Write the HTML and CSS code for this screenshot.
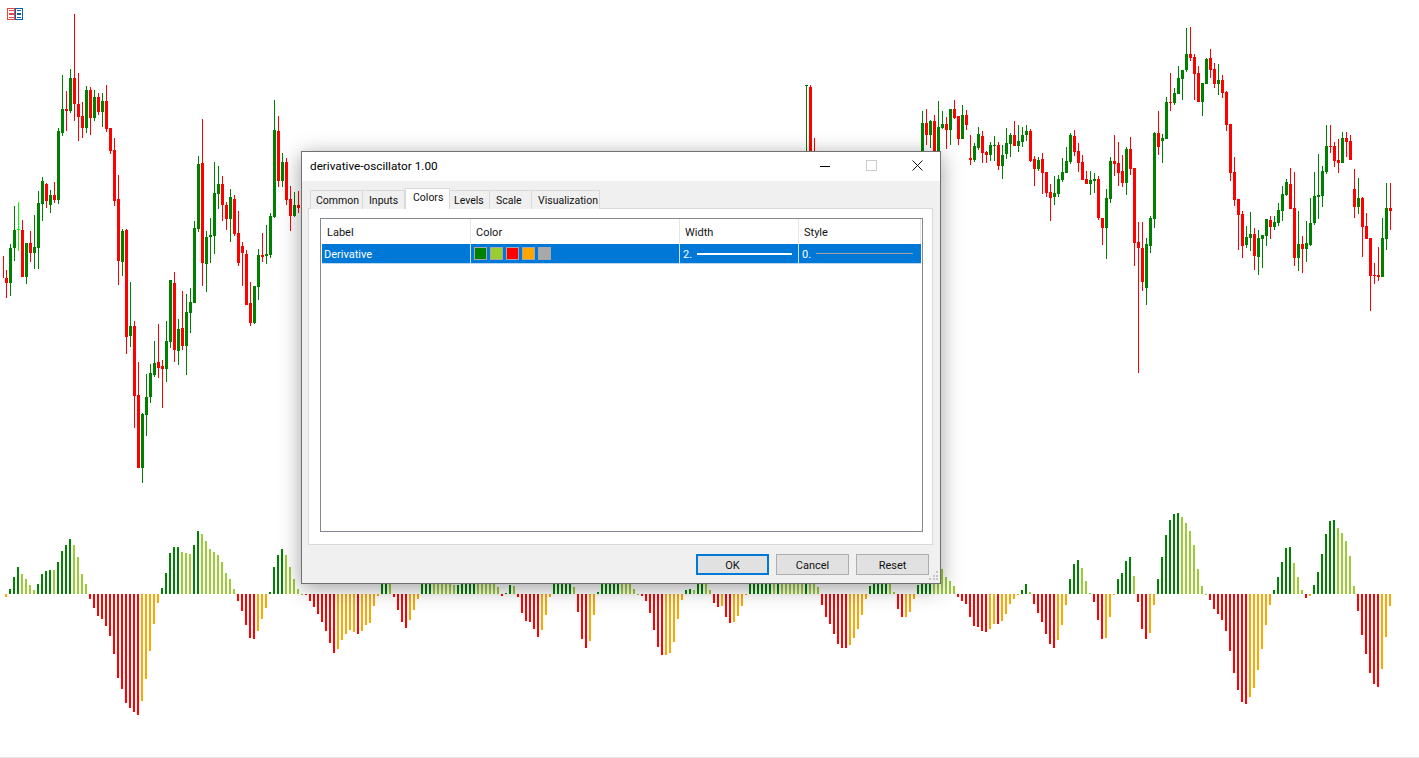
FILE: index.html
```html
<!DOCTYPE html>
<html lang="en">
<head>
<meta charset="utf-8">
<title>derivative-oscillator 1.00</title>
<link rel="stylesheet" href="styles.css">
</head>
<body>
<main class="stage">
  <svg id="chart" class="chart" width="1419" height="757" viewBox="0 0 1419 757" shape-rendering="crispEdges"></svg>
  <svg class="chart-icon" width="16" height="12" viewBox="0 0 16 12" shape-rendering="crispEdges">
    <rect x="0.5" y="0.5" width="7" height="11" fill="none" stroke="#e8453c"/>
    <rect x="2" y="2" width="5" height="1" fill="#e8453c"/>
    <rect x="2" y="5" width="5" height="2" fill="#e8453c"/>
    <rect x="2" y="9" width="5" height="1" fill="#e8453c"/>
    <rect x="8.5" y="0.5" width="7" height="11" fill="none" stroke="#0a64ad"/>
    <rect x="10" y="2" width="4" height="1" fill="#0a64ad"/>
    <rect x="10" y="5" width="4" height="2" fill="#0a64ad"/>
    <rect x="10" y="9" width="4" height="1" fill="#0a64ad"/>
  </svg>

  <section class="dialog">
    <header class="titlebar">
      <h1 class="title">derivative-oscillator 1.00</h1>
      <div class="controls">
        <span class="control"><svg width="10" height="10" viewBox="0 0 10 10"><path d="M0 5.5H10" stroke="#000" fill="none"/></svg></span>
        <span class="control"><svg width="11" height="11" viewBox="0 0 11 11"><rect x="0.5" y="0.5" width="10" height="10" stroke="#cccccc" fill="none"/></svg></span>
        <span class="control"><svg width="11" height="11" viewBox="0 0 11 11"><path d="M0.5 0.5L10.5 10.5M10.5 0.5L0.5 10.5" stroke="#111" fill="none"/></svg></span>
      </div>
    </header>
    <div class="body">
      <nav class="tabs">
        <span class="tab tab-common">Common</span>
        <span class="tab tab-inputs">Inputs</span>
        <span class="tab tab-colors tab-active">Colors</span>
        <span class="tab tab-levels">Levels</span>
        <span class="tab tab-scale">Scale</span>
        <span class="tab tab-vis">Visualization</span>
      </nav>
      <div class="panel">
        <div class="list">
          <div class="list-head">
            <span class="head-cell">Label</span>
            <span class="head-cell">Color</span>
            <span class="head-cell">Width</span>
            <span class="head-cell">Style</span>
          </div>
          <div class="list-row">
            <span class="row-cell row-label">Derivative</span>
            <span class="row-cell row-colors">
              <i class="swatch swatch-green"></i>
              <i class="swatch swatch-lime"></i>
              <i class="swatch swatch-red"></i>
              <i class="swatch swatch-orange"></i>
              <i class="swatch swatch-gray"></i>
            </span>
            <span class="row-cell row-line"><span class="line-num">2.</span><i class="line line-thick"></i></span>
            <span class="row-cell row-line"><span class="line-num">0.</span><i class="line line-thin"></i></span>
          </div>
        </div>
      </div>
      <footer class="buttons">
        <button class="btn btn-default" type="button">OK</button>
        <button class="btn" type="button">Cancel</button>
        <button class="btn" type="button">Reset</button>
      </footer>
    </div>
    <svg class="grip" width="10" height="10" viewBox="0 0 10 10" shape-rendering="crispEdges" fill="#c6c6c6">
      <rect x="7" y="0" width="2" height="2"/>
      <rect x="3.5" y="3.5" width="2" height="2"/><rect x="7" y="3.5" width="2" height="2"/>
      <rect x="0" y="7" width="2" height="2"/><rect x="3.5" y="7" width="2" height="2"/><rect x="7" y="7" width="2" height="2"/>
    </svg>
  </section>
</main>
<script src="chart.js"></script>
</body>
</html>
```
FILE: styles.css
```css
* { box-sizing: border-box; }
html, body { margin: 0; padding: 0; background: #fff; }
body { width: 1419px; height: 758px; overflow: hidden; font-family: Roboto, "Open Sans", sans-serif; font-size: 11px; color: #111; }
.stage { position: relative; width: 1419px; height: 758px; border-bottom: 1px solid #e6e6e6; }
.chart { display: block; }
.chart-icon { position: absolute; left: 7px; top: 8px; }

.dialog { position: absolute; left: 301px; top: 151px; width: 640px; height: 433px; display: flex; flex-direction: column; background: #f0f0f0; border: 1px solid #707070; box-shadow: 0 4px 20px rgba(0, 0, 0, .38); }
.titlebar { height: 29px; flex: none; display: flex; align-items: center; justify-content: space-between; padding-left: 8px; background: #fff; }
.title { margin: 0 0 2px; font-size: 11.75px; font-weight: 400; color: #000; }
.controls { display: flex; height: 29px; }
.control { width: 46px; display: flex; align-items: center; justify-content: center; padding-bottom: 2px; }

.body { flex: 1; display: flex; flex-direction: column; padding: 7px 7px 0 6px; min-height: 0; }
.tabs { height: 21px; flex: none; display: flex; align-items: flex-start; padding-left: 2px; position: relative; z-index: 1; font-size: 10.5px; }
.tab { height: 19px; margin-top: 2px; display: flex; align-items: center; background: #f0f0f0; border: 1px solid #d9d9d9; border-bottom: 0; border-left: 0; color: #111; }
.tab-common { width: 53px; padding-left: 5px; border-left: 1px solid #d9d9d9; }
.tab-inputs { width: 42px; padding-left: 6px; }
.tab-colors { width: 45px; padding-left: 7px; }
.tab-levels { width: 40px; padding-left: 4px; }
.tab-scale { width: 42px; padding-left: 6px; }
.tab-vis { width: 68px; padding-left: 6px; }
.tab-active { height: 21px; margin-top: 0; background: #fff; padding-bottom: 3px; border-left: 1px solid #d9d9d9; }

.panel { height: 337px; flex: none; margin-top: -1px; padding: 9px 9px 12px 11px; background: #fff; border: 1px solid #d9d9d9; }
.list { height: 100%; padding: 0 1px; border: 1px solid #828790; background: #fff; }
.list-head, .list-row { display: grid; grid-template-columns: 149px 209px 119px 122px; }
.list-head { height: 25px; }
.head-cell { display: flex; align-items: center; padding: 1px 0 0 5px; border-right: 1px solid #e5e5e5; }
.list-row { height: 20px; background: #0078d7; border-bottom: 1px solid #bcd6ec; color: #fff; }
.row-cell { display: flex; align-items: center; border-right: 1px solid #cfe3f4; }
.row-cell:last-child { border-right: 0; }
.row-label { padding: 1px 0 0 2px; }
.row-colors { padding-left: 3px; gap: 3px; }
.swatch { width: 13px; height: 13px; border: 1px solid #a6a6a6; }
.swatch-green { background: #008000; }
.swatch-lime { background: #9acd32; }
.swatch-red { background: #ff0000; }
.swatch-orange { background: #ffa500; }
.swatch-gray { background: #a9a9a9; }
.row-line { padding-left: 3px; }
.line-num { width: 14px; flex: none; padding-top: 1px; }
.line { display: block; width: 95px; }
.line-thick { height: 2px; background: #fff; }
.line-thin { height: 1px; width: 97px; background: #a89f9b; }

.buttons { display: flex; justify-content: flex-end; gap: 7px; padding: 9px 4px 0 0; }
.btn { width: 73px; height: 21px; padding: 1px 0 0; font: inherit; color: #111; background: #e1e1e1; border: 1px solid #adadad; border-radius: 0; }
.btn-default { border: 2px solid #0078d7; }
.grip { position: absolute; right: 1px; bottom: 2px; }
```
FILE: chart.js
```js
var HIST = "O-3 G5 G17 G27 L20 L15 L9 L4 G10 G20 G23 G24 L24 G32 G43 G49 G55 L49 L37 L20 L10 R-5 R-14 R-22 R-25 R-32 R-42 R-60 R-84 R-95 R-109 R-114 R-118 R-121 O-107 O-85 O-57 O-30 O-9 G6 G21 G41 G47 G47 L42 L41 L40 G49 G63 L60 L53 L45 L42 L39 L32 L21 L15 L5 R-7 R-17 R-31 R-44 R-45 O-37 O-25 O-14 G2 G27 G39 G45 L39 L27 L15 L5 L-1 R-1 R-7 R-13 R-20 R-28 R-37 R-49 R-59 O-55 O-46 O-40 O-36 O-38 R-40 O-37 O-31 O-29 O-12 O-2 G20 G20 L14 R-3 R-16 R-28 R-34 O-26 O-16 O-5 G20 G20 G20 L20 L20 L20 L20 L20 L9 G9 G20 G20 G20 G20 L20 L20 L20 L20 L20 L7 R-2 G1 G9 L8 R-3 R-19 R-27 R-28 R-35 R-43 O-36 O-21 O-3 G20 G20 G20 G20 G20 L7 R-18 R-45 R-54 O-47 O-21 G2 G20 G20 G20 G20 G20 L20 L20 L20 L5 L-1 R-2 R-7 R-19 R-36 R-53 R-61 O-61 O-59 O-48 O-25 O-6 G4 G5 L4 G20 G20 L20 L4 R-9 R-13 O-12 R-23 R-29 O-28 O-22 O-12 O-1 G20 G20 G20 G20 G20 G20 L20 G20 L20 L20 L20 L20 L20 L20 G20 L20 L20 L7 R-11 R-23 R-30 R-40 R-50 R-54 R-54 O-51 O-44 O-35 O-21 O-5 G8 G20 G20 G20 G20 L13 L2 R-15 R-23 O-23 O-18 O-5 G9 G20 G20 G20 L20 L20 L25 L17 L13 L8 R-3 R-7 R-10 R-23 R-32 R-33 R-37 R-38 O-35 O-30 R-30 O-27 O-20 O-10 O-5 O-1 G4 G10 L2 R-10 R-19 R-28 R-40 R-50 R-54 O-46 O-31 O-11 G15 G30 G34 L26 L13 L1 R-8 R-26 R-45 O-44 O-23 O-1 G15 G21 G33 G37 L18 R-8 R-35 R-45 O-39 O-11 G15 G37 G59 G74 G80 G81 L77 L71 L63 L49 L25 L8 L-1 R-6 R-15 R-20 R-26 R-37 R-57 R-79 R-96 R-108 R-110 O-103 O-94 O-76 O-55 O-31 O-11 G4 G17 G32 G46 G47 L31 L17 L4 R-4 O-2 G9 G22 G40 G60 G73 G74 L66 L61 L53 L38 L8 R-17 R-41 R-60 R-79 R-90 R-93 O-75 O-43 O-12";

var C = "-0.75 R 256 262 262 278|0 R 270 278 283 298|1 G 244 248 283 296|2 G 206 230 248 261|3 B 202 229 230 251|4 R 220 230 277 277|5 G 243 243 277 284|6 R 231 243 253 262|7 G 215 247 253 269|8 G 191 203 248 269|9 G 177 181 204 221|10 R 183 184 201 208|11 G 190 195 205 213|12 R 182 195 200 203|13 G 128 131 200 204|14 G 75 109 133 136|15 R 91 109 111 131|16 G 69 78 111 113|17 R 14 78 104 121|18 R 73 104 117 141|19 R 102 116 128 138|20 G 86 90 128 133|21 R 87 90 118 135|22 G 90 97 118 121|23 R 93 97 112 115|24 G 93 101 112 127|25 R 85 101 129 132|26 R 128 128 151 154|27 R 138 150 201 206|28 R 175 199 261 285|29 G 229 231 262 276|30 R 229 230 337 354|31 G 282 326 336 347|32 R 321 326 396 428|33 R 362 395 468 468|34 G 413 414 468 483|35 G 374 397 415 436|36 G 364 373 397 403|37 G 341 363 375 377|38 R 324 362 368 378|39 R 360 366 369 408|40 G 321 341 369 382|41 G 280 280 342 348|42 R 272 283 350 362|43 G 319 329 351 365|44 R 291 328 346 350|45 G 294 312 346 375|46 G 288 302 313 333|47 G 221 228 303 303|48 G 156 164 229 232|49 R 119 163 263 286|50 G 231 237 264 292|51 G 218 235 237 263|52 G 162 193 236 254|53 G 166 184 194 209|54 R 176 184 205 221|55 R 202 205 219 230|56 G 189 197 219 242|57 R 195 199 234 236|58 R 211 233 263 266|59 R 242 246 253 286|60 R 250 254 305 305|61 R 282 303 323 326|62 G 286 286 323 324|63 G 249 255 287 300|64 R 233 255 257 262|65 G 225 254 256 264|66 G 213 216 255 258|67 G 100 130 217 218|68 R 116 131 181 187|69 G 153 162 181 187|70 R 158 162 200 205|71 R 186 199 216 231|72 G 192 205 216 217|73 R 191 205 208 213|200 G 85 85 86 160|201 R 85 87 160 160|202 R 138 160 165 165|229 G 111 123 160 160|230 R 109 123 135 145|231 G 120 121 135 148|232 R 115 121 160 160|233 G 101 127 160 160|234 G 111 124 128 129|235 R 117 124 130 149|236 G 109 109 130 145|237 R 100 109 118 119|238 R 116 116 139 145|239 G 105 115 139 139|240 R 110 115 125 130|241 R 135 158 160 165|242 G 143 146 160 162|243 G 127 134 148 150|244 R 131 136 153 163|245 R 151 152 155 163|246 G 142 145 155 161|247 G 136 145 146 161|248 R 142 145 166 170|249 G 145 155 166 179|250 G 128 143 154 159|251 G 133 135 144 157|252 R 121 135 146 146|253 G 125 141 146 152|254 G 127 135 142 147|255 G 125 131 135 141|256 R 129 131 161 162|257 R 156 159 169 186|258 G 157 160 169 171|259 R 153 159 173 194|260 R 172 172 193 197|261 R 184 192 198 221|262 G 176 193 197 205|263 G 175 179 194 197|264 G 158 172 180 182|265 G 147 161 173 173|266 G 133 135 162 164|267 R 130 136 152 156|268 R 143 151 163 172|269 R 155 162 180 180|270 R 171 179 184 184|271 G 171 180 184 195|272 G 173 179 181 193|273 R 176 179 218 220|274 R 218 218 228 245|275 G 189 198 228 259|276 G 157 161 199 203|277 R 135 161 164 176|278 R 142 163 173 186|279 R 155 171 183 187|280 G 147 149 183 195|281 R 137 149 169 175|282 R 168 168 243 266|283 R 222 242 248 373|284 R 222 248 282 291|285 G 238 244 288 305|286 G 216 218 246 253|287 G 132 133 219 228|288 R 111 133 147 155|289 G 134 138 141 163|290 G 97 102 139 139|291 R 73 102 103 111|292 G 88 93 103 105|293 G 66 78 94 94|294 G 70 70 79 100|295 G 28 54 70 72|296 R 27 54 58 61|297 R 54 57 74 100|298 R 66 73 102 102|299 G 83 83 102 116|300 G 58 59 84 84|301 R 49 58 70 78|302 R 63 69 84 88|303 G 64 80 84 95|304 R 75 80 93 98|305 R 91 92 125 131|306 R 124 124 173 181|307 R 157 172 200 206|308 R 199 199 215 250|309 R 211 214 246 258|310 G 226 237 245 248|311 G 212 234 238 251|312 R 228 234 256 270|313 G 230 238 257 275|314 G 235 235 239 268|315 G 219 219 236 246|316 R 216 220 227 239|317 G 216 222 227 230|318 G 203 210 223 226|319 G 186 194 211 221|320 G 179 182 195 196|321 R 168 184 209 209|322 R 172 208 258 266|323 G 211 244 258 271|324 R 236 244 249 273|325 G 221 243 249 262|326 G 198 223 245 246|327 G 172 196 223 225|328 G 154 195 197 219|329 G 166 171 196 207|330 G 125 146 172 174|331 R 125 146 147 153|332 R 142 146 161 167|333 R 139 160 163 173|334 G 132 138 163 163|335 R 132 138 142 157|336 R 135 141 160 160|337 R 169 189 207 218|338 G 178 198 207 214|339 R 197 198 227 257|340 R 213 226 239 239|341 R 238 238 276 311|342 R 263 275 276 284|343 R 247 275 277 281|344 G 218 238 277 277|345 G 183 208 239 250|346 R 183 208 211 230";

var svg = document.getElementById("chart");
var NS = "http://www.w3.org/2000/svg";
var FILL = { G: "#008000", L: "#9acd32", R: "#ff0000", O: "#ffa500", B: "#00ff00" };
var ZERO = 594;

function rect(x, y, w, h, fill) {
  var r = document.createElementNS(NS, "rect");
  r.setAttribute("x", x);
  r.setAttribute("y", y);
  r.setAttribute("width", w);
  r.setAttribute("height", h);
  r.setAttribute("fill", fill);
  svg.appendChild(r);
}

C.split("|").forEach(function (row) {
  var p = row.split(" ");
  var k = +p[0], f = FILL[p[1]], wt = +p[2], bt = +p[3], bb = +p[4], wb = +p[5];
  var x = 5 + 4 * k;
  rect(x + 1, wt, 1, wb - wt, f);
  if (bb > bt) rect(x, bt, 3, bb - bt, f);
});

HIST.split(" ").forEach(function (tok, k) {
  var f = FILL[tok.charAt(0)], v = +tok.slice(1);
  var x = 5 + 4 * k;
  if (v >= 0) rect(x, ZERO - v, 2, v, f);
  else rect(x, ZERO, 2, -v, f);
});
```
